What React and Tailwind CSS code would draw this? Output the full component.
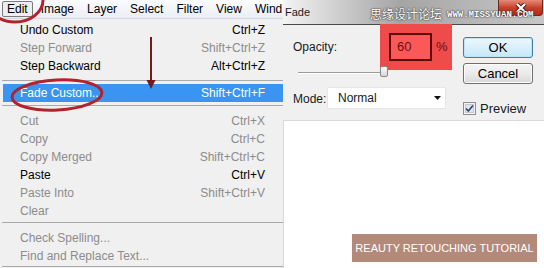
import React from "react";

const menuBar = ["Image", "Layer", "Select", "Filter", "View", "Wind"];

const MenuRow = ({ label, shortcut, disabled, active }) => {
  if (active) {
    return (
      <div className="h-[18px] ml-[3px] pl-[17px] pr-[18px] flex items-center justify-between bg-[#3a94f2] text-white">
        <span>{label}</span>
        <span>{shortcut}</span>
      </div>
    );
  }
  return (
    <div
      className={`h-[18px] pl-[20px] pr-[18px] flex items-center justify-between ${
        disabled ? "text-[#8c8c8c]" : "text-black"
      }`}
    >
      <span>{label}</span>
      <span>{shortcut}</span>
    </div>
  );
};

const Separator = ({ className }) => (
  <div className={`pl-[2px] ${className}`}>
    <div className="h-px bg-[#a9a9a9]" />
  </div>
);

const App = () => {
  return (
    <div className="w-[544px] h-[268px] relative overflow-hidden flex bg-white font-['Liberation_Sans',Arial,sans-serif]">
      {/* Photoshop Edit menu */}
      <div className="w-[283px] shrink-0 flex flex-col bg-[#f0f0f0] text-[12px]">
        <div className="h-[19px] flex items-center gap-[3px] pl-[2px] whitespace-nowrap overflow-hidden bg-linear-to-b from-[#fbfcfe] to-[#eaeef4] border-b border-[#d3d7de]">
          <span className="h-[16px] px-[4px] leading-[14px] border border-[#7b7b7b] rounded-[2px] bg-[#eceef1]">
            Edit
          </span>
          {menuBar.map((m) => (
            <span key={m} className="px-[5px] last:pr-0">
              {m}
            </span>
          ))}
        </div>

        <div className="pt-[2px]">
          <MenuRow label="Undo Custom" shortcut="Ctrl+Z" />
          <MenuRow label="Step Forward" shortcut="Shift+Ctrl+Z" disabled />
          <MenuRow label="Step Backward" shortcut="Alt+Ctrl+Z" />
          <Separator className="pt-[5px] pb-[3px]" />
          <MenuRow label="Fade Custom..." shortcut="Shift+Ctrl+F" active />
          <Separator className="pt-[3px] pb-[6px]" />
          <MenuRow label="Cut" shortcut="Ctrl+X" disabled />
          <MenuRow label="Copy" shortcut="Ctrl+C" disabled />
          <MenuRow label="Copy Merged" shortcut="Shift+Ctrl+C" disabled />
          <MenuRow label="Paste" shortcut="Ctrl+V" />
          <MenuRow label="Paste Into" shortcut="Shift+Ctrl+V" disabled />
          <MenuRow label="Clear" disabled />
          <Separator className="pt-[2px] pb-[6px]" />
          <MenuRow label="Check Spelling..." disabled />
          <MenuRow label="Find and Replace Text..." disabled />
          <Separator className="pt-[1px]" />
        </div>
      </div>

      {/* Fade dialog */}
      <div className="flex-1 flex flex-col">
        <div className="h-[25px] relative flex items-start border-b border-[#4a4a4a] bg-linear-to-r from-[#f4f4f4] via-[#a5a5a5] via-45% to-[#c7c7c7]">
          <span className="pl-[2px] pt-[4px] text-[11px] text-[#1b1b1b]">Fade</span>
          <div className="ml-auto mr-[1px] w-[45px] h-[16px] flex items-center justify-center rounded-b-[4px] border border-t-0 border-[#6a2a20] bg-linear-to-b from-[#e48a78] via-[#c8412c] to-[#b32a18]">
            <svg width="12" height="10" viewBox="0 0 12 10">
              <path d="M2 1 L10 9 M10 1 L2 9" stroke="#3a1a14" strokeWidth="4" />
              <path d="M2 1 L10 9 M10 1 L2 9" stroke="#ffffff" strokeWidth="2.2" />
            </svg>
          </div>
          {/* watermark */}
          <div className="absolute left-[87px] top-[8px] flex items-center gap-[5px] text-white [text-shadow:0_0_2px_#2a2a2a,0_0_1px_#2a2a2a]">
            <span className="text-[12px] leading-[12px] font-['Noto_Sans_CJK_SC',sans-serif]">思缘设计论坛</span>
            <span className="text-[9px] leading-[9px] font-bold font-['Liberation_Mono',monospace] pt-[3px]">
              WWW.MISSYUAN.COM
            </span>
          </div>
        </div>

        <div className="h-[95px] relative flex bg-[#f0f0f0] text-[12px] text-[#1a1a1a]">
          {/* red highlight */}
          <div className="absolute left-[97px] top-[-1px] w-[72px] h-[46px] bg-[#ef4b4b]" />

          <div className="relative w-[170px] pl-[10px] pt-[8px] flex flex-col">
            <div className="h-[28px] flex items-center">
              <span className="w-[96px]">Opacity:</span>
              <div className="w-[43px] h-[28px] flex items-center pl-[6px] border-2 border-[#5c0a0a] bg-[#fb5858] text-[13px] text-[#6b0f0f]">
                60
              </div>
              <span className="ml-[4px] text-[13px] text-[#6b0f0f]">%</span>
            </div>

            <div className="relative h-[12px] w-[92px] ml-[5px] mt-[5px]">
              <div className="absolute left-0 right-[4px] top-[6px] h-px bg-[#9c9c9c]" />
              <div className="absolute left-0 right-[4px] top-[7px] h-px bg-white" />
              <div className="absolute left-[82px] top-0 w-[8px] h-[11px] rounded-[2px] border border-[#8a8a8a] bg-linear-to-b from-[#fdfdfd] to-[#d6d6d6]" />
            </div>

            <div className="h-[22px] mt-[9px] flex items-center">
              <span className="w-[34px] pt-[2px]">Mode:</span>
              <div className="w-[119px] h-[22px] flex items-center pl-[10px] pr-[4px] bg-white border border-[#e6e6e6]">
                <span>Normal</span>
                <svg className="ml-auto" width="7" height="4" viewBox="0 0 7 4">
                  <path d="M0 0 H7 L3.5 4 Z" fill="#111" />
                </svg>
              </div>
            </div>
          </div>

          <div className="pl-[10px] pt-[12px] flex flex-col">
            <button className="w-[70px] h-[21px] rounded-[3px] border border-[#3c7fb1] bg-linear-to-b from-[#eef8fd] to-[#c6e7f9] shadow-[inset_0_0_0_1px_#bfe4f8] text-[13px] text-black">
              OK
            </button>
            <button className="mt-[5px] w-[70px] h-[21px] rounded-[3px] border border-[#707070] bg-linear-to-b from-[#f4f4f4] via-[#ebebeb] to-[#d8d8d8] shadow-[inset_0_0_0_1px_#fbfbfb] text-[13px] text-black">
              Cancel
            </button>
            <div className="mt-[15px] flex items-center gap-[4px]">
              <svg width="13" height="13" viewBox="0 0 13 13">
                <rect x="0.5" y="0.5" width="12" height="12" fill="#f4f4f4" stroke="#8e8f8f" />
                <rect x="2.5" y="2.5" width="8" height="8" fill="#e2e6ea" stroke="#c4c8cc" />
                <path d="M3 6.5 L5.3 9 L10 3.5" stroke="#2f4a86" strokeWidth="1.8" fill="none" />
              </svg>
              <span className="text-[13px]">Preview</span>
            </div>
          </div>
        </div>

        <div className="flex-1 flex items-end justify-end pr-[7px] pb-[6px] bg-white border-t border-l border-[#d9d9d9]">
          <div className="w-[185px] h-[28px] flex items-center justify-center bg-[#b3897a] text-white text-[11px]">
            REAUTY RETOUCHING TUTORIAL
          </div>
        </div>
      </div>

      {/* red annotations */}
      <svg className="absolute inset-0 pointer-events-none" width="544" height="268" viewBox="0 0 544 268">
        <ellipse cx="15" cy="0" rx="28" ry="22" fill="none" stroke="#b3232b" strokeWidth="3" />
        <ellipse
          cx="57"
          cy="95"
          rx="45"
          ry="15"
          fill="none"
          stroke="#b3232b"
          strokeWidth="3"
          transform="rotate(-3 57 95)"
        />
        <line x1="151" y1="37" x2="151" y2="82" stroke="#7a1717" strokeWidth="2" />
        <polygon points="146.5,80 155.5,80 151,89" fill="#7a1717" />
      </svg>
    </div>
  );
};

export default App;
